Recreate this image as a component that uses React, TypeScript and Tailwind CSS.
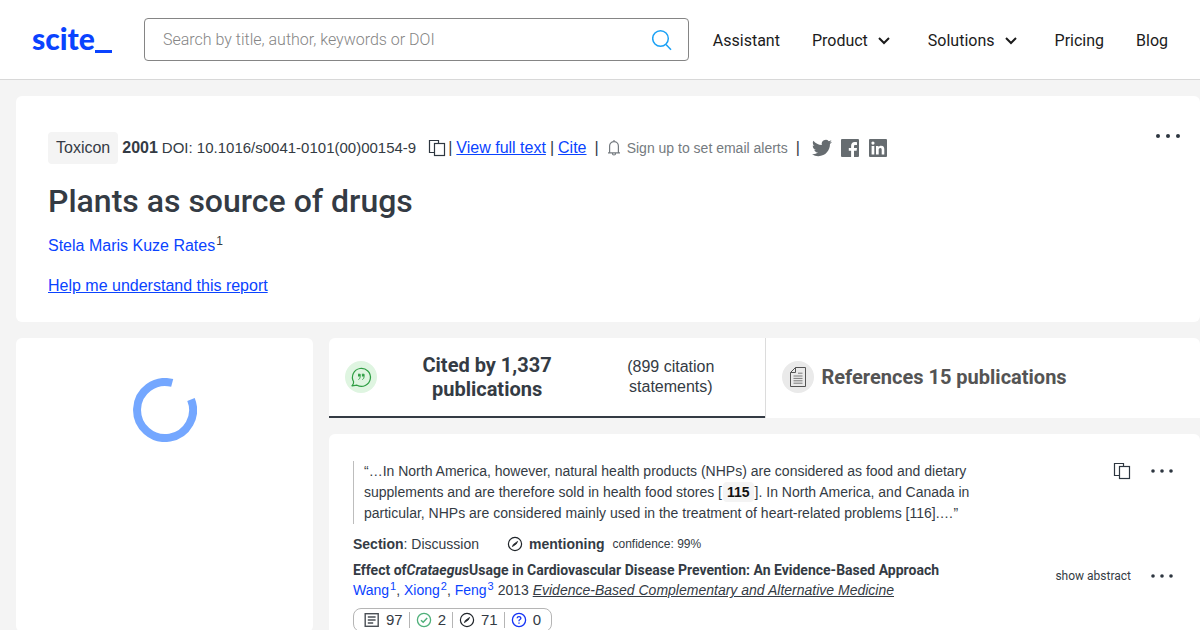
import React from "react";

const sans = "font-['Liberation_Sans',Arial,sans-serif]";
const display = "font-['Roboto','Liberation_Sans',sans-serif]";

function Dots() {
  return (
    <svg width="26" height="6" viewBox="0 0 26 6" fill="#2d3640" aria-hidden="true">
      <circle cx="3" cy="3" r="2" />
      <circle cx="13" cy="3" r="2" />
      <circle cx="23" cy="3" r="2" />
    </svg>
  );
}

function SmallDots() {
  return (
    <svg width="22" height="6" viewBox="0 0 22 6" fill="#2d3640" aria-hidden="true">
      <circle cx="2" cy="3" r="1.8" />
      <circle cx="11" cy="3" r="1.8" />
      <circle cx="20" cy="3" r="1.8" />
    </svg>
  );
}

function CopyIcon() {
  return (
    <svg width="18" height="18" viewBox="0 0 18 18" fill="none" stroke="#2d3640" strokeWidth="1.2" aria-hidden="true">
      <path d="M6 13.5H1.5V1.5h9V4" />
      <rect x="6.5" y="4.5" width="10" height="12" />
    </svg>
  );
}

function Chevron() {
  return (
    <svg width="12" height="8" viewBox="0 0 12 8" fill="none" stroke="#1b1b1b" strokeWidth="2" aria-hidden="true">
      <path d="M1 1l5 5 5-5" />
    </svg>
  );
}

function MentionIcon() {
  return (
    <svg width="16" height="16" viewBox="0 0 16 16" fill="none" stroke="#1f2429" aria-hidden="true">
      <circle cx="8" cy="8" r="6.6" strokeWidth="1.2" />
      <path d="M5.4 10.6l1-2.2 4.2-3-1.3 2.6z" fill="#1f2429" strokeWidth="0.8" />
    </svg>
  );
}

function Header() {
  return (
    <header className="flex h-20 items-center border-b border-[#d8d8d8] bg-white px-8">
      <a href="#home" aria-label="scite_" className="mr-8 flex w-20 shrink-0 items-baseline pb-1 text-[#0a43ff]">
        <span className="font-['Lato',sans-serif] text-[30px] leading-8 font-black">scite</span>
        <span className="h-[3px] flex-1 translate-y-[3px] bg-[#0a43ff]" />
      </a>
      <form className="mr-6 flex h-[43px] min-w-0 flex-1 items-center rounded border border-[#858585] pr-4 pl-[18px]">
        <input
          type="text"
          aria-label="Search"
          placeholder="Search by title, author, keywords or DOI"
          className={`${display} min-w-0 flex-1 text-base font-light outline-none placeholder:text-[#858585]`}
        />
        <button type="button" aria-label="Submit search">
          <svg width="20" height="22" viewBox="0 0 20 22" fill="none" stroke="#1ba1f5" strokeWidth="1.5" aria-hidden="true">
            <circle cx="8.5" cy="9.5" r="7.8" />
            <path d="M14 15.4l5 5.4" />
          </svg>
        </button>
      </form>
      <nav className={`${display} flex items-center gap-8 pt-[2px] text-base text-[#1b1b1b]`}>
        <a href="#assistant">Assistant</a>
        <button type="button" className="flex items-center gap-[10px] pr-[6px]">
          Product <Chevron />
        </button>
        <button type="button" className="flex items-center gap-[10px] pr-[6px]">
          Solutions <Chevron />
        </button>
        <a href="#pricing">Pricing</a>
        <a href="#blog">Blog</a>
      </nav>
    </header>
  );
}

function PaperCard() {
  return (
    <section className="flex items-start rounded-md bg-white pt-9 pb-6 pl-8">
      <div className="min-w-0 flex-1">
        <div className="flex h-8 items-center text-base whitespace-nowrap">
          <span className="rounded bg-[#f4f4f4] px-2 py-1">Toxicon</span>
          <b className="ml-1">2001</b>
          <span className="ml-1 text-[15px]">DOI: 10.1016/s0041-0101(00)00154-9</span>
          <button type="button" aria-label="Copy DOI" className="ml-3">
            <CopyIcon />
          </button>
          <span className="ml-[2px]">|</span>
          <a href="#full" className="ml-1 text-[#0a43ff] underline">View full text</a>
          <span className="ml-1">|</span>
          <a href="#cite" className="ml-1 text-[#0a43ff] underline">Cite</a>
          <span className="ml-2">|</span>
          <button type="button" className="ml-2 flex items-center gap-[6px] text-sm text-[#757b80]">
            <svg width="14" height="18" viewBox="0 0 14 18" fill="none" stroke="#757b80" strokeWidth="1.2" aria-hidden="true">
              <path d="M1 13.8h12M2.6 13.6V7a4.4 4.4 0 0 1 8.8 0v6.6M7 2.5V1M5.4 14.2a1.6 1.8 0 0 0 3.2 0" />
            </svg>
            Sign up to set email alerts
          </button>
          <span className="ml-2">|</span>
          <span className="ml-3 flex items-center gap-2">
            <a href="#twitter" aria-label="Twitter">
              <svg width="20" height="20" viewBox="0 0 24 24" fill="#666c70" aria-hidden="true">
                <path d="M23.953 4.57a10 10 0 01-2.825.775 4.958 4.958 0 002.163-2.723c-.951.555-2.005.959-3.127 1.184a4.92 4.92 0 00-8.384 4.482C7.69 8.095 4.067 6.13 1.64 3.162a4.822 4.822 0 00-.666 2.475c0 1.71.87 3.213 2.188 4.096a4.904 4.904 0 01-2.228-.616v.06a4.923 4.923 0 003.946 4.827 4.996 4.996 0 01-2.212.085 4.936 4.936 0 004.604 3.417 9.867 9.867 0 01-6.102 2.105c-.39 0-.779-.023-1.17-.067a13.995 13.995 0 007.557 2.209c9.053 0 13.998-7.496 13.998-13.985 0-.21 0-.42-.015-.63A9.935 9.935 0 0024 4.59z" />
              </svg>
            </a>
            <a href="#facebook" aria-label="Facebook">
              <svg width="20" height="20" viewBox="0 0 20 20" aria-hidden="true">
                <rect x="1" y="1" width="18" height="18" rx="1" fill="#666c70" />
                <path d="M17 4.2V7h-1.6c-1 0-1.4.5-1.4 1.4V10h3l-.4 2.8H14V19h-2.9v-6.2H8.8V10h2.3V7.8c0-2.3 1.4-3.7 3.6-3.7 1 0 1.8 0 2.3.1z" fill="#fff" />
              </svg>
            </a>
            <a href="#linkedin" aria-label="LinkedIn">
              <svg width="20" height="20" viewBox="0 0 20 20" aria-hidden="true">
                <rect x="1" y="1" width="18" height="18" rx="1" fill="#666c70" />
                <path d="M3.6 8h2.7v8.4H3.6zM8 8h2.5v1.2c.4-.8 1.3-1.4 2.6-1.4 2.6 0 3.2 1.6 3.2 3.9v4.7h-2.6v-4.2c0-1 0-2.2-1.4-2.2s-1.6 1-1.6 2.1v4.3H8z" fill="#fff" />
                <circle cx="4.95" cy="5.1" r="1.6" fill="#fff" />
              </svg>
            </a>
          </span>
        </div>
        <h1 className={`${display} mt-4 text-[32px] leading-[42px] font-medium`}>Plants as source of drugs</h1>
        <p className="mt-3 text-base leading-6">
          <a href="#author" className="text-[#0a43ff]">Stela Maris Kuze Rates</a>
          <sup className="pl-px text-xs leading-none">1</sup>
        </p>
        <p className="mt-4 text-base leading-6">
          <a href="#help" className="text-[#0a43ff] underline">Help me understand this report</a>
        </p>
      </div>
      <button type="button" aria-label="More options" className="mr-[19px] flex h-2 items-center">
        <Dots />
      </button>
    </section>
  );
}

function Tabs() {
  return (
    <div className="grid h-20 grid-cols-2 overflow-hidden rounded-t-md bg-white">
      <button type="button" className="flex items-center border-b-2 border-[#343b44] pr-3 pl-4">
        <svg width="32" height="32" viewBox="0 0 32 32" fill="none" aria-hidden="true" className="mr-2 shrink-0">
          <circle cx="16" cy="16" r="16" fill="#dff5e1" />
          <path d="M8.6 20.8A9 9 0 1 1 12 24.2L7 24.8q1.8-1.6 1.6-4z" stroke="#2f9e44" strokeWidth="1.2" strokeLinejoin="round" />
          <path d="M13 13.2h2.2v2.6q0 2-1.8 2.8M16.9 13.2h2.2v2.6q0 2-1.8 2.8" stroke="#2f9e44" strokeWidth="0.9" />
          <path d="M13 13.2h2.2v2.2H13zM16.9 13.2h2.2v2.2h-2.2z" fill="#2f9e44" />
        </svg>
        <span className={`${display} flex flex-[5] justify-center text-xl leading-6 font-bold`}>
          <span className="max-w-40">Cited by 1,337 publications</span>
        </span>
        <span className="flex flex-[4] justify-center text-base leading-5">
          <span className="max-w-28">(899 citation statements)</span>
        </span>
      </button>
      <button type="button" className="flex items-center gap-2 border-l border-[#dcdcdc] pb-[2px] pl-4 text-[#545454]">
        <svg width="32" height="32" viewBox="0 0 32 32" fill="none" aria-hidden="true" className="shrink-0">
          <circle cx="16" cy="16" r="16" fill="#eaeaea" />
          <path d="M13.5 6.5h10v19h-15v-14zM13.5 6.5v5h-5" stroke="#545454" />
          <path d="M16 12.2h4.5M11.5 15h9M11.5 17.4h9M11.5 19.8h9M11.5 22.2h9" stroke="#7a7a7a" />
        </svg>
        <span className={`${display} text-xl leading-6 font-bold`}>References 15 publications</span>
      </button>
    </div>
  );
}

function Tally() {
  return (
    <div className="mt-2 flex h-6 w-fit items-center rounded-lg border border-[#b5b5b5] px-[10px] text-[15px] leading-4">
      <span className="flex items-center gap-[6px] border-r border-[#b5b5b5] pr-[6px]">
        <svg width="16" height="16" viewBox="0 0 16 16" fill="none" stroke="#4a4f55" strokeWidth="1.4" aria-hidden="true">
          <rect x="1.2" y="1.7" width="13" height="12.6" />
          <path d="M3.8 5h7.8M3.8 8h7.8M3.8 11h5.4" />
        </svg>
        97
      </span>
      <span className="flex items-center gap-[6px] border-r border-[#b5b5b5] px-[6px]">
        <svg width="16" height="16" viewBox="0 0 16 16" fill="none" stroke="#4fb07a" strokeWidth="1.3" aria-hidden="true">
          <circle cx="8" cy="8" r="6.6" />
          <path d="M5 8.2l2.2 2.1 4-4.2" strokeWidth="1.5" />
        </svg>
        2
      </span>
      <span className="flex items-center gap-[6px] border-r border-[#b5b5b5] px-[6px]">
        <MentionIcon />
        71
      </span>
      <span className="flex items-center gap-[6px] pl-[6px]">
        <svg width="16" height="16" viewBox="0 0 16 16" fill="none" stroke="#1433f5" strokeWidth="1.3" aria-hidden="true">
          <circle cx="8" cy="8" r="6.6" />
          <path d="M6.1 6.3q.1-1.7 1.9-1.7t1.9 1.5q0 .9-.9 1.4-1 .5-1 1.4v.3M8 10.4v1.3" />
        </svg>
        0
      </span>
    </div>
  );
}

function Citation() {
  return (
    <article className="mt-4 rounded-t-md bg-white pt-[27px] pr-[27px] pl-6 text-sm">
      <div className="flex items-start justify-between">
        <blockquote className="max-w-[630px] border-l border-[#bdbdbd] pl-[10px] leading-[21px]">
          “…In North America, however, natural health products (NHPs) are considered as food and dietary supplements and
          are therefore sold in health food stores [
          <a href="#ref115" className="mx-px rounded bg-[#f4f4f4] px-1 py-[2px] font-bold text-[#111]">115</a>
          ]. In North America, and Canada in particular, NHPs are considered mainly used in the treatment of
          heart-related problems [116].…”
        </blockquote>
        <div className="flex h-5 items-center gap-5">
          <button type="button" aria-label="Copy statement">
            <CopyIcon />
          </button>
          <button type="button" aria-label="Statement options">
            <SmallDots />
          </button>
        </div>
      </div>
      <div className="mt-2 flex h-6 items-center">
        <span><b>Section</b>: Discussion</span>
        <span className="ml-7 flex items-center gap-[6px]">
          <MentionIcon />
          <b>mentioning</b>
        </span>
        <span className="ml-2 text-xs">confidence: 99%</span>
      </div>
      <div className="mt-1 flex items-center justify-between leading-5">
        <div>
          <h2 className={`${display} font-bold`}>
            Effect of<i>Crataegus</i>Usage in Cardiovascular Disease Prevention: An Evidence-Based Approach
          </h2>
          <p>
            <a href="#wang" className="text-[#0a43ff]">Wang<sup className="pl-px text-[11px] leading-none">1</sup></a>,{" "}
            <a href="#xiong" className="text-[#0a43ff]">Xiong<sup className="pl-px text-[11px] leading-none">2</sup></a>,{" "}
            <a href="#feng" className="text-[#0a43ff]">Feng<sup className="pl-px text-[11px] leading-none">3</sup></a>{" "}
            2013{" "}
            <a href="#journal" className="italic underline">Evidence-Based Complementary and Alternative Medicine</a>
          </p>
        </div>
        <div className="flex items-center gap-5 pb-2">
          <button type="button" className={`${display} text-xs`}>show abstract</button>
          <button type="button" aria-label="Paper options">
            <SmallDots />
          </button>
        </div>
      </div>
      <Tally />
    </article>
  );
}

export default function App() {
  return (
    <div className={`${sans} min-h-screen bg-[#f4f4f4] text-[#343b44]`}>
      <Header />
      <main className="pt-4 pl-4">
        <PaperCard />
        <div className="mt-4 grid grid-cols-[297px_1fr] gap-4">
          <aside className="flex items-start justify-center rounded-md bg-white pt-10">
            <svg width="64" height="64" viewBox="1 1 64 64" fill="none" stroke="#74a7ff" strokeWidth="8" role="img" aria-label="Loading">
              <path d="M40.2 5.95A28 28 0 1 0 59 22.5" />
            </svg>
          </aside>
          <div className="min-w-0">
            <Tabs />
            <Citation />
          </div>
        </div>
      </main>
    </div>
  );
}
